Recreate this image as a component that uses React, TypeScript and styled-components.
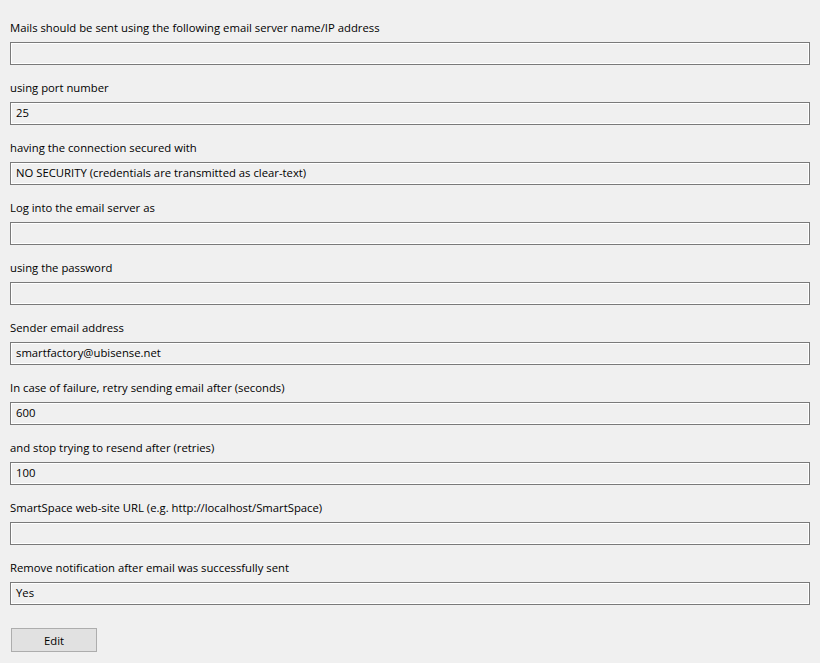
import React from "react";
import styled, { createGlobalStyle } from "styled-components";

const Global = createGlobalStyle`
  html, body { margin: 0; padding: 0; background: #f0f0f0; }
  body { font-family: "Segoe UI", "Open Sans", "Liberation Sans", sans-serif; }
`;

const Page = styled.div`
  width: 820px;
  height: 663px;
  box-sizing: border-box;
  padding: 20px 11px 0 10px;
  background: #f0f0f0;
  display: flex;
  flex-direction: column;
`;

const Field = styled.div`
  display: flex;
  flex-direction: column;
  gap: 6px;
  margin-bottom: 15px;
`;

const Label = styled.div`
  font-size: 11.3px;
  line-height: 16px;
  height: 16px;
  color: #000;
  white-space: nowrap;
`;

const Box = styled.div`
  box-sizing: border-box;
  width: 800px;
  height: 23px;
  border: 1px solid #7a7a7a;
  box-shadow: inset 0 0 0 1px #ffffff;
  background: #f0f0f0;
  padding: 0 5px;
  font-size: 11.3px;
  line-height: 20px;
  color: #000;
  white-space: nowrap;
`;

const Button = styled.button`
  box-sizing: border-box;
  margin: 8px 0 0 1px;
  width: 86px;
  height: 24px;
  border: 1px solid #adadad;
  background: #e1e1e1;
  font-family: inherit;
  font-size: 11.3px;
  color: #000;
  padding: 0;
`;

const fields: [string, string][] = [
  ["Mails should be sent using the following email server name/IP address", ""],
  ["using port number", "25"],
  ["having the connection secured with", "NO SECURITY (credentials are transmitted as clear-text)"],
  ["Log into the email server as", ""],
  ["using the password", ""],
  ["Sender email address", "smartfactory@ubisense.net"],
  ["In case of failure, retry sending email after (seconds)", "600"],
  ["and stop trying to resend after (retries)", "100"],
  ["SmartSpace web-site URL (e.g. http://localhost/SmartSpace)", ""],
  ["Remove notification after email was successfully sent", "Yes"],
];

export default function App() {
  return (
    <>
      <Global />
      <Page>
        {fields.map(([l, v]) => (
          <Field key={l}>
            <Label>{l}</Label>
            <Box>{v}</Box>
          </Field>
        ))}
        <Button>Edit</Button>
      </Page>
    </>
  );
}
